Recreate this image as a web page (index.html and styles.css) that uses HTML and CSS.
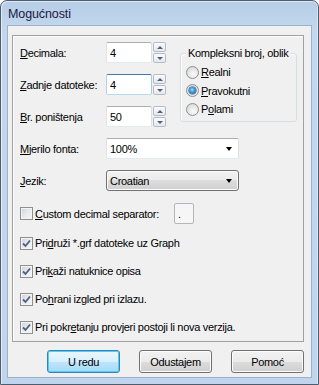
FILE: index.html
```html
<!DOCTYPE html>
<html>
<head>
<meta charset="utf-8">
<link rel="stylesheet" href="styles.css">
</head>
<body>
<div class="window">
  <div class="titlebar"><span class="title">Mogućnosti</span></div>
  <div class="client">
    <div class="group">
      <div class="top">
        <div class="spins">
          <div class="row">
            <span class="lbl"><u>D</u>ecimala:</span>
            <div class="tb">4</div>
            <div class="spin"><div class="sb"><i class="up"></i></div><div class="sb"><i class="down"></i></div></div>
          </div>
          <div class="row">
            <span class="lbl"><u>Z</u>adnje datoteke:</span>
            <div class="tb focus">4</div>
            <div class="spin"><div class="sb"><i class="up"></i></div><div class="sb"><i class="down"></i></div></div>
          </div>
          <div class="row">
            <span class="lbl"><u>B</u>r. poništenja</span>
            <div class="tb">50</div>
            <div class="spin"><div class="sb"><i class="up"></i></div><div class="sb"><i class="down"></i></div></div>
          </div>
        </div>
        <div class="kbox">
          <span class="legend">Kompleksni broj, oblik</span>
          <div class="radio"><span class="rb"></span><span><u>R</u>ealni</span></div>
          <div class="radio"><span class="rb on"></span><span><u>P</u>ravokutni</span></div>
          <div class="radio"><span class="rb"></span><span>P<u>o</u>lami</span></div>
        </div>
      </div>
      <div class="row mt11">
        <span class="lbl"><u>M</u>jerilo fonta:</span>
        <div class="combo edit"><span>100%</span><i class="arrow"></i></div>
      </div>
      <div class="row mt11">
        <span class="lbl"><u>J</u>ezik:</span>
        <div class="combo btn"><span>Croatian</span><i class="arrow"></i></div>
      </div>
      <div class="row mt12">
        <span class="cb"></span>
        <span class="cbtext seplbl"><u>C</u>ustom decimal separator:</span>
        <div class="sep">.</div>
      </div>
      <div class="crow first">
        <span class="cb"><svg width="11" height="11" viewBox="0 0 11 11"><path d="M2 5.5 L4.5 8 L9 2.5" fill="none" stroke="#4a5f8e" stroke-width="1.8"/></svg></span>
        <span class="cbtext">Pri<u>d</u>ruži *.grf datoteke uz Graph</span>
      </div>
      <div class="crow">
        <span class="cb"><svg width="11" height="11" viewBox="0 0 11 11"><path d="M2 5.5 L4.5 8 L9 2.5" fill="none" stroke="#4a5f8e" stroke-width="1.8"/></svg></span>
        <span class="cbtext">Pri<u>k</u>aži natuknice opisa</span>
      </div>
      <div class="crow">
        <span class="cb"><svg width="11" height="11" viewBox="0 0 11 11"><path d="M2 5.5 L4.5 8 L9 2.5" fill="none" stroke="#4a5f8e" stroke-width="1.8"/></svg></span>
        <span class="cbtext">Po<u>h</u>rani izgled pri izlazu.</span>
      </div>
      <div class="crow">
        <span class="cb"><svg width="11" height="11" viewBox="0 0 11 11"><path d="M2 5.5 L4.5 8 L9 2.5" fill="none" stroke="#4a5f8e" stroke-width="1.8"/></svg></span>
        <span class="cbtext">Pri pokr<u>e</u>tanju provjeri postoji li nova verzija.</span>
      </div>
    </div>
    <div class="buttons">
      <div class="button default">U redu</div>
      <div class="button">Odustajem</div>
      <div class="button">Pomoć</div>
    </div>
  </div>
</div>
</body>
</html>
```
FILE: styles.css
```css
html, body {
  margin: 0;
  padding: 0;
  background: #ffffff;
}
body {
  font-family: "Liberation Sans", Arial, sans-serif;
  font-size: 11px;
  color: #000;
}
.window {
  width: 319px;
  height: 385px;
  box-sizing: border-box;
  border: 1px solid #4e5d6e;
  border-radius: 7px 7px 0 0;
  background: linear-gradient(to bottom, #b6cde6 0px, #c3d8ee 30px, #bfd5ed 100%);
  padding: 0 6px 6px 6px;
  display: flex;
  flex-direction: column;
  box-shadow: inset 1px 1px 0 rgba(255,255,255,0.6), inset -1px 0 0 rgba(255,255,255,0.4);
}
.titlebar {
  height: 24px;
  display: flex;
  align-items: center;
  padding-left: 1px;
  flex: none;
}
.title {
  font-size: 12.5px;
  color: #1d1940;
  letter-spacing: -0.1px;
  padding-top: 1px;
}
.client {
  flex: 1;
  background: #f0f0f0;
  border: 1px solid #9cb1c8;
  padding: 9px 0 0 4px;
  display: flex;
  flex-direction: column;
  letter-spacing: -0.3px;
}
.group {
  width: 292px;
  height: 307px;
  box-sizing: border-box;
  border: 1px solid #a0a0a0;
  box-shadow: inset 1px 1px 0 #ffffff;
  padding: 6px 0 0 7px;
}
.top {
  display: flex;
  align-items: flex-start;
}
.spins {
  display: flex;
  flex-direction: column;
  gap: 11px;
}
.row {
  display: flex;
  align-items: center;
  height: 21px;
}
.mt11 { margin-top: 11px; }
.mt12 { margin-top: 12px; }
.lbl {
  width: 86px;
  flex: none;
}
.tb {
  width: 46px;
  height: 21px;
  box-sizing: border-box;
  border: 1px solid;
  border-color: #abadb3 #dbdfe6 #e3e9ef #e2e3ea;
  border-radius: 2px;
  background: #fff;
  padding-left: 3px;
  display: flex;
  align-items: center;
}
.tb.focus {
  border-color: #3d7bad #a4c9e3 #b7d9ed #b5cfe7;
}
.spin {
  margin-left: 1px;
  width: 13px;
  height: 21px;
  display: flex;
  flex-direction: column;
  gap: 1px;
}
.sb {
  height: 10px;
  box-sizing: border-box;
  border: 1px solid #b8bcc2;
  border-radius: 2px;
  background: linear-gradient(to bottom, #fbfbfb, #e6e8eb);
  display: flex;
  align-items: center;
  justify-content: center;
}
.up, .down {
  width: 0;
  height: 0;
  border-left: 3px solid transparent;
  border-right: 3px solid transparent;
}
.up { border-bottom: 3px solid #4d6185; }
.down { border-top: 3px solid #4d6185; }
.kbox {
  position: relative;
  margin-left: 14px;
  margin-top: 11px;
  width: 117px;
  height: 69px;
  box-sizing: border-box;
  border: 1px solid #d5dfe5;
  border-radius: 3px;
  box-shadow: inset 1px 1px 0 #fff;
  padding: 9px 0 0 5px;
}
.legend {
  position: absolute;
  top: -7px;
  left: 5px;
  padding: 0 2px;
  line-height: 13px;
  background: #f0f0f0;
  white-space: nowrap;
}
.radio {
  height: 18.5px;
  display: flex;
  align-items: center;
  gap: 2px;
}
.rb {
  width: 13px;
  height: 13px;
  box-sizing: border-box;
  border-radius: 50%;
  border: 1px solid #8e8f8f;
  background: radial-gradient(circle at 60% 65%, #fbfbfb 0%, #e8e8e8 45%, #cfd1d4 100%);
  display: flex;
  align-items: center;
  justify-content: center;
  flex: none;
}
.rb.on::after {
  content: "";
  width: 7px;
  height: 7px;
  border-radius: 50%;
  background: radial-gradient(circle at 45% 40%, #a4e0fb 0%, #3c9bd8 40%, #185b98 100%);
  box-shadow: 0 0 0 0.5px #1a4c7c;
}
.combo {
  width: 133px;
  height: 21px;
  box-sizing: border-box;
  border: 1px solid;
  display: flex;
  align-items: center;
  justify-content: space-between;
  padding: 0 6px 0 3px;
}
.combo.edit {
  background: #fff;
  border-color: #abadb3 #dbdfe6 #e3e9ef #e2e3ea;
  border-radius: 2px;
}
.combo.btn {
  border-color: #707070;
  border-radius: 3px;
  background: linear-gradient(to bottom, #f2f2f2 0%, #ebebeb 50%, #dddddd 50%, #cfcfcf 100%);
  box-shadow: inset 0 0 0 1px #fcfcfc;
}
.arrow {
  width: 0;
  height: 0;
  border-left: 3.5px solid transparent;
  border-right: 3.5px solid transparent;
  border-top: 4px solid #000;
  margin-top: 1px;
}
.cb {
  width: 13px;
  height: 13px;
  box-sizing: border-box;
  border: 1px solid #8e8f8f;
  background: linear-gradient(135deg, #cfd2d6 0%, #e8e9ea 50%, #f8f8f8 100%);
  box-shadow: inset 0 0 0 1px #f4f4f4;
  display: flex;
  align-items: center;
  justify-content: center;
  flex: none;
}
.cb svg { display: block; }
.cbtext {
  margin-left: 2px;
  white-space: nowrap;
}
.seplbl {
  width: 139px;
  flex: none;
}
.sep {
  width: 20px;
  height: 21px;
  box-sizing: border-box;
  border: 1px solid #b3b7bc;
  border-radius: 2px;
  background: #f6f6f6;
  padding-left: 3px;
  display: flex;
  align-items: center;
}
.crow {
  display: flex;
  align-items: center;
  height: 20px;
  margin-top: 8px;
}
.crow.first { margin-top: 9px; }
.buttons {
  margin-top: 8px;
  display: flex;
  justify-content: flex-end;
  gap: 19px;
  padding-right: 7px;
}
.button {
  width: 73px;
  height: 23px;
  box-sizing: border-box;
  border: 1px solid #707070;
  border-radius: 3px;
  background: linear-gradient(to bottom, #f2f2f2 0%, #ebebeb 50%, #dddddd 50%, #cfcfcf 100%);
  box-shadow: inset 0 0 0 1px #fcfcfc;
  display: flex;
  align-items: center;
  justify-content: center;
}
.button.default {
  border-color: #3c7fb1;
  background: linear-gradient(to bottom, #eaf6fd 0%, #d9f0fc 50%, #bee6fd 50%, #a7d9f5 100%);
  box-shadow: inset 0 0 0 1px #48d2fa;
}
```
